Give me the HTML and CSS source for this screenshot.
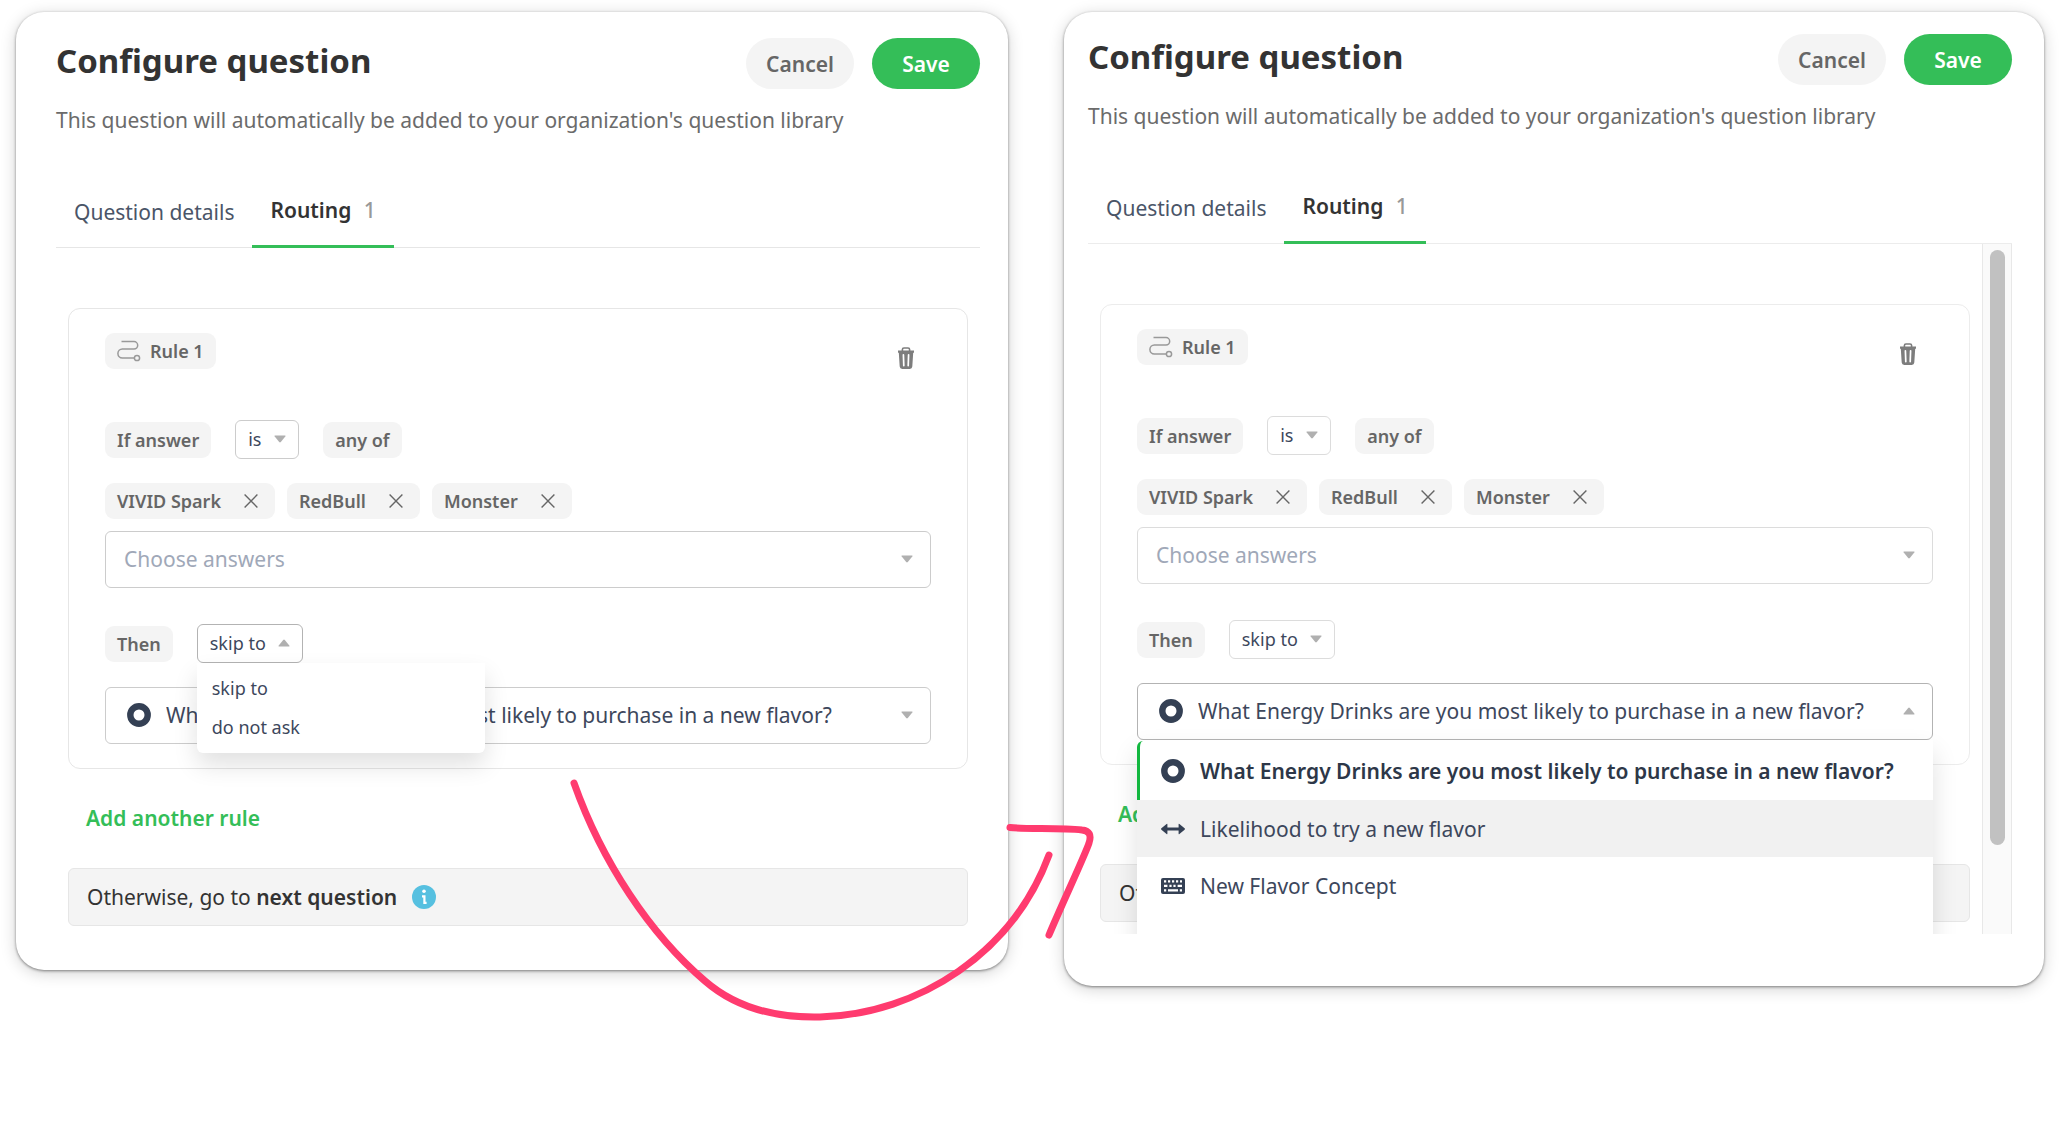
FILE: index.html
```html
<!DOCTYPE html>
<html lang="en">
<head>
    <meta charset="UTF-8">
    <meta name="viewport" content="width=device-width, initial-scale=1.0">
    <title>Configure question</title>
    <link rel="stylesheet" href="styles.css">
</head>
<body>

<!-- shared icons -->
<svg class="sprite" aria-hidden="true">
    <symbol id="route" viewBox="0 0 24 22">
        <path d="M4.5 1.6H17a3.6 3.6 0 0 1 0 7.4H5.4a4.4 4.4 0 0 0 0 9H17.4" fill="none" stroke="currentColor" stroke-width="1.5"/>
        <circle cx="20" cy="18" r="2.6" fill="none" stroke="currentColor" stroke-width="1.5"/>
    </symbol>
    <symbol id="trash" viewBox="0 0 16 22">
        <path d="M4.4 4V2.6Q4.4 1 6 1h4q1.6 0 1.6 1.6V4" fill="none" stroke="currentColor" stroke-width="1.6"/>
        <path d="M0 3.6h16v2.2h-.8L14.3 19.6Q14.1 22 11.8 22H4.2Q1.9 22 1.7 19.6L.8 5.8H0z" fill="currentColor"/>
        <path d="M5.4 7.8l.4 10.8M10.6 7.8l-.4 10.8" stroke="#fff" stroke-width="1.7" stroke-linecap="round"/>
    </symbol>
    <symbol id="cross" viewBox="0 0 14 14">
        <path d="M.6.6l12.8 12.8M13.4.6L.6 13.4" stroke="currentColor" stroke-width="1.4"/>
    </symbol>
    <symbol id="caret-down" viewBox="0 0 12 8">
        <path d="M1 .5h10q1 0 .3.9L6.8 7q-.8.8-1.6 0L.7 1.4Q0 .5 1 .5z" fill="currentColor"/>
    </symbol>
    <symbol id="caret-up" viewBox="0 0 12 8">
        <path d="M1 7.5h10q1 0 .3-.9L6.8 1q-.8-.8-1.6 0L.7 6.6Q0 7.5 1 7.5z" fill="currentColor"/>
    </symbol>
    <symbol id="ring" viewBox="0 0 24 24">
        <circle cx="12" cy="12" r="8.7" fill="none" stroke="currentColor" stroke-width="6.4"/>
    </symbol>
    <symbol id="arrows" viewBox="0 0 24 24">
        <path d="M5 12h14" stroke="currentColor" stroke-width="3"/>
        <path d="M6.4 7.4v9.2q0 .9-.8.3L.4 12.7q-.7-.7 0-1.4l5.2-4.2q.8-.6.8.3zM17.6 7.4v9.2q0 .9.8.3l5.2-4.2q.7-.7 0-1.4l-5.2-4.2q-.8-.6-.8.3z" fill="currentColor"/>
    </symbol>
    <symbol id="keyboard" viewBox="0 0 24 24">
        <rect x="0" y="4" width="24" height="16" rx="2" fill="currentColor"/>
        <path d="M3 7.4h2.200M7 7.400h2.200M11 7.400h2.200M15 7.400h2.200M19 7.400h2M3 11.900h3.400M8.400 11.900h2.200M12.400 11.900h2.200M16.600 11.900h4.400M3 16.400h2.200M7 16.400h10M18.800 16.400h2.200" stroke="#fff" stroke-width="2.200"/>
    </symbol>
    <symbol id="info" viewBox="0 0 24 24">
        <circle cx="12" cy="12" r="12" fill="#56c0e0"/>
        <circle cx="12" cy="6.3" r="1.8" fill="#fff"/>
        <path d="M10 11.4h2.4v6.4h2.200" fill="none" stroke="#fff" stroke-width="2.200"/>
    </symbol>
</svg>

<main class="board">

    <section class="card card-left">
        <header class="card-header">
            <h1>Configure question</h1>
            <div class="actions">
                <button class="btn btn-cancel">Cancel</button>
                <button class="btn btn-save">Save</button>
            </div>
        </header>
        <p class="subtitle">This question will automatically be added to your organization's question library</p>

        <nav class="tabs">
            <a href="#details" class="tab">Question details</a>
            <a href="#routing" class="tab active">Routing <span class="count">1</span></a>
        </nav>

        <div class="routing">
            <div class="rule">
                <div class="rule-head">
                    <span class="chip"><svg class="icon-route"><use href="#route"/></svg>Rule 1</span>
                    <button class="trash" aria-label="Delete rule"><svg><use href="#trash"/></svg></button>
                </div>

                <div class="row condition">
                    <label class="chip" for="operator1">If answer</label>
                    <div class="select small is">
                        <select id="operator1"><option>is</option></select>
                        <svg class="caret"><use href="#caret-down"/></svg>
                    </div>
                    <span class="chip">any of</span>
                </div>

                <div class="row answers">
                    <span class="chip">VIVID Spark<button class="remove" aria-label="Remove VIVID Spark"><svg><use href="#cross"/></svg></button></span>
                    <span class="chip">RedBull<button class="remove" aria-label="Remove RedBull"><svg><use href="#cross"/></svg></button></span>
                    <span class="chip">Monster<button class="remove" aria-label="Remove Monster"><svg><use href="#cross"/></svg></button></span>
                </div>

                <div class="select">
                    <select class="placeholder" aria-label="Choose answers"><option>Choose answers</option></select>
                    <svg class="caret"><use href="#caret-down"/></svg>
                </div>

                <div class="row then">
                    <label class="chip" for="action1">Then</label>
                    <div class="select small skip open">
                        <select id="action1"><option>skip to</option><option>do not ask</option></select>
                        <svg class="caret"><use href="#caret-up"/></svg>
                        <ul class="menu menu-action">
                            <li>skip to</li>
                            <li>do not ask</li>
                        </ul>
                    </div>
                </div>

                <div class="select with-icon">
                    <svg class="type"><use href="#ring"/></svg>
                    <select aria-label="Target question"><option>What Energy Drinks are you most likely to purchase in a new flavor?</option></select>
                    <svg class="caret"><use href="#caret-down"/></svg>
                </div>
            </div>

            <button class="add-rule">Add another rule</button>

            <div class="otherwise">
                <span>Otherwise, go to <strong>next question</strong></span>
                <svg class="icon-info"><use href="#info"/></svg>
            </div>
        </div>
    </section>

    <section class="card card-right">
        <header class="card-header">
            <h1>Configure question</h1>
            <div class="actions">
                <button class="btn btn-cancel">Cancel</button>
                <button class="btn btn-save">Save</button>
            </div>
        </header>
        <p class="subtitle">This question will automatically be added to your organization's question library</p>

        <nav class="tabs">
            <a href="#details" class="tab">Question details</a>
            <a href="#routing" class="tab active">Routing <span class="count">1</span></a>
        </nav>

        <div class="scroller">
            <div class="routing">
                <div class="rule">
                    <div class="rule-head">
                        <span class="chip"><svg class="icon-route"><use href="#route"/></svg>Rule 1</span>
                        <button class="trash" aria-label="Delete rule"><svg><use href="#trash"/></svg></button>
                    </div>

                    <div class="row condition">
                        <label class="chip" for="operator2">If answer</label>
                        <div class="select small is">
                            <select id="operator2"><option>is</option></select>
                            <svg class="caret"><use href="#caret-down"/></svg>
                        </div>
                        <span class="chip">any of</span>
                    </div>

                    <div class="row answers">
                        <span class="chip">VIVID Spark<button class="remove" aria-label="Remove VIVID Spark"><svg><use href="#cross"/></svg></button></span>
                        <span class="chip">RedBull<button class="remove" aria-label="Remove RedBull"><svg><use href="#cross"/></svg></button></span>
                        <span class="chip">Monster<button class="remove" aria-label="Remove Monster"><svg><use href="#cross"/></svg></button></span>
                    </div>

                    <div class="select">
                        <select class="placeholder" aria-label="Choose answers"><option>Choose answers</option></select>
                        <svg class="caret"><use href="#caret-down"/></svg>
                    </div>

                    <div class="row then">
                        <label class="chip" for="action2">Then</label>
                        <div class="select small skip">
                            <select id="action2"><option>skip to</option><option>do not ask</option></select>
                            <svg class="caret"><use href="#caret-down"/></svg>
                        </div>
                    </div>

                    <div class="select with-icon open">
                        <svg class="type"><use href="#ring"/></svg>
                        <select aria-label="Target question"><option>What Energy Drinks are you most likely to purchase in a new flavor?</option></select>
                        <svg class="caret"><use href="#caret-up"/></svg>
                        <ul class="menu menu-question">
                            <li class="selected"><svg><use href="#ring"/></svg>What Energy Drinks are you most likely to purchase in a new flavor?</li>
                            <li class="hovered"><svg><use href="#arrows"/></svg>Likelihood to try a new flavor</li>
                            <li><svg><use href="#keyboard"/></svg>New Flavor Concept</li>
                        </ul>
                    </div>
                </div>

                <button class="add-rule">Add another rule</button>

                <div class="otherwise">
                    <span>Otherwise, go to <strong>next question</strong></span>
                    <svg class="icon-info"><use href="#info"/></svg>
                </div>
            </div>
            <div class="track"><div class="thumb"></div></div>
        </div>
    </section>

    <!-- hand drawn arrow from the first menu to the second -->
    <svg class="arrow" viewBox="560 770 550 260" aria-hidden="true">
        <path d="M574 783C602 862 650 934 705 981C736 1008 776 1018 820 1017C920 1014 1013 952 1049 855"/>
        <path d="M1010 827.5C1025 829.5 1060 827.5 1082 830Q1093 831 1089 843C1086 853 1062 904 1049 935"/>
    </svg>

</main>

</body>
</html>
```
FILE: styles.css
```css
* {
    box-sizing: border-box;
}

body {
    margin: 0;
    background-color: #fff;
    font-family: "Noto Sans", sans-serif;
    font-size: 21px;
    line-height: 28px;
    color: #333;
}

button, select {
    font-family: inherit;
    font-size: inherit;
    cursor: pointer;
}

button {
    border: none;
    background: none;
    padding: 0;
}

svg {
    display: block;
    flex-shrink: 0;
}

.sprite {
    position: absolute;
    width: 0;
    height: 0;
}

.board {
    position: relative;
    display: grid;
    grid-template-columns: 992fr 980fr;
    align-items: start;
    gap: 56px;
    min-height: 100vh;
    padding: 12px 16px;
}

.card {
    background-color: #fff;
    border-radius: 28px;
    box-shadow: 0 1px 3px rgba(0, 0, 0, 0.45), 0 3px 16px rgba(0, 0, 0, 0.18);
    --green: #34be58;
    --line: #e6e6e6;
    --border: #cccccc;
}

.card-left {
    padding: 26px 28px 44px 40px;
}

.card-right {
    padding: 22px 32px 52px 24px;
    --line: #ececec;
    --border: #dcdcdc;
}

/* header */
.card-header {
    display: flex;
    justify-content: space-between;
    align-items: flex-start;
}

h1 {
    margin: 0;
    font-size: 33px;
    line-height: 46px;
    font-weight: 700;
}

.actions {
    display: flex;
    gap: 18px;
}

.btn {
    width: 108px;
    height: 51px;
    border-radius: 26px;
    font-weight: 600;
}

.btn-cancel {
    background-color: #f4f4f4;
    color: #666;
}

.btn-save {
    background-color: #34be58;
    color: #fff;
}

.subtitle {
    margin: 16px 0 61px;
    line-height: 30px;
    color: #6b6b6b;
}

/* tabs */
.tabs {
    display: flex;
    align-items: flex-end;
    border-bottom: 1px solid var(--line);
}

.tab {
    margin-bottom: -1px;
    padding: 0 18px 22px;
    color: #4a5568;
    text-decoration: none;
}

.tab.active {
    padding-bottom: 21px;
    border-bottom: 3px solid var(--green);
    color: #333;
    font-weight: 600;
}

.count {
    margin-left: 7px;
    color: #999;
    font-weight: 500;
}

.routing {
    padding: 60px 12px 0;
}

/* rule box */
.rule {
    padding: 24px 36px;
    border: 1px solid var(--line);
    border-radius: 12px;
}

.rule-head {
    display: flex;
    justify-content: space-between;
    align-items: flex-start;
    margin-bottom: 37px;
}

.row {
    display: flex;
    align-items: center;
    gap: 24px;
}

.answers {
    gap: 12px;
    margin: 24px 0 12px;
}

.then {
    margin: 36px 0 24px;
}

.chip {
    display: flex;
    align-items: center;
    height: 36px;
    padding: 0 12px;
    border-radius: 9px;
    background-color: #f4f4f4;
    color: #666;
    font-size: 18px;
    font-weight: 600;
}

.icon-route {
    width: 24px;
    height: 22px;
    margin-right: 9px;
    color: #999;
}

.trash {
    display: flex;
    align-items: center;
    justify-content: center;
    width: 50px;
    height: 50px;
    color: #7d7d7d;
}

.trash svg {
    width: 16px;
    height: 22px;
}

.remove {
    margin: 0 5px 0 23px;
    color: #666;
}

.remove svg {
    width: 14px;
    height: 14px;
}

/* selects */
.select {
    position: relative;
}

.select select {
    display: block;
    width: 100%;
    height: 57px;
    padding: 0 48px 1px 18px;
    border: 1px solid var(--border);
    border-radius: 6px;
    background-color: #fff;
    color: #3d475c;
    appearance: none;
}

.select .placeholder {
    color: #a0a8b8;
}

.select.open select {
    border-color: #b3b3b3;
}

.select.small select {
    height: 39px;
    padding: 0 0 1px 12px;
    font-size: 18px;
}

.is {
    width: 64px;
}

.skip {
    width: 106px;
}

.caret {
    position: absolute;
    top: 24px;
    right: 18px;
    width: 12px;
    height: 8px;
    color: #b0b0b0;
    pointer-events: none;
}

.small .caret {
    top: 15px;
    right: 13px;
}

.select.with-icon select {
    padding-left: 60px;
}

.type {
    position: absolute;
    top: 16px;
    left: 22px;
    width: 24px;
    height: 24px;
    color: #344054;
}

/* open menus */
.menu {
    position: absolute;
    top: 100%;
    left: 0;
    z-index: 2;
    margin: 0;
    padding: 0;
    list-style: none;
    background-color: #fff;
    color: #3d475c;
}

.menu-action {
    width: 288px;
    padding: 6px 0;
    border-radius: 0 0 6px 6px;
    box-shadow: 0 12px 24px rgba(0, 0, 0, 0.12);
    font-size: 18px;
}

.menu-action li {
    padding: 0 15px;
    line-height: 39px;
}

.menu-question {
    width: 100%;
    height: 260px;
    padding-top: 1px;
    box-shadow: 0 12px 24px rgba(0, 0, 0, 0.12);
}

.menu-question li {
    display: flex;
    align-items: center;
    gap: 15px;
    height: 57px;
    padding-left: 24px;
}

.menu-question svg {
    width: 24px;
    height: 24px;
    color: #344054;
}

.menu-question .selected {
    height: 59px;
    padding-left: 21px;
    border-left: 3px solid #12b73f;
    border-top-left-radius: 6px;
    color: #2d3748;
    font-weight: 600;
}

.menu-question .hovered {
    background-color: #f1f1f1;
}

/* below the rule */
.add-rule {
    display: block;
    margin: 34px 0 35px 18px;
    line-height: 30px;
    color: var(--green);
    font-weight: 600;
}

.otherwise {
    display: flex;
    align-items: center;
    gap: 15px;
    height: 58px;
    padding: 0 18px;
    border: 1px solid #e6e6e6;
    border-radius: 6px;
    background-color: #f4f4f4;
}

.otherwise strong {
    font-weight: 600;
}

.icon-info {
    width: 24px;
    height: 24px;
}

/* scrolling panel */
.scroller {
    display: flex;
    height: 690px;
    overflow: hidden;
}

.scroller .routing {
    flex: 1;
}

.track {
    width: 30px;
    padding: 6px 6px 0 7px;
    border: solid #e8e8e8;
    border-width: 0 1px;
    background-color: #fafafa;
}

.thumb {
    height: 87%;
    border-radius: 8px;
    background-color: #c1c1c1;
}

.arrow {
    position: absolute;
    top: 770px;
    left: 560px;
    z-index: 5;
    width: 550px;
    height: 260px;
    fill: none;
    stroke: #ff3b6f;
    stroke-width: 7;
    stroke-linecap: round;
    stroke-linejoin: round;
    pointer-events: none;
}
```
